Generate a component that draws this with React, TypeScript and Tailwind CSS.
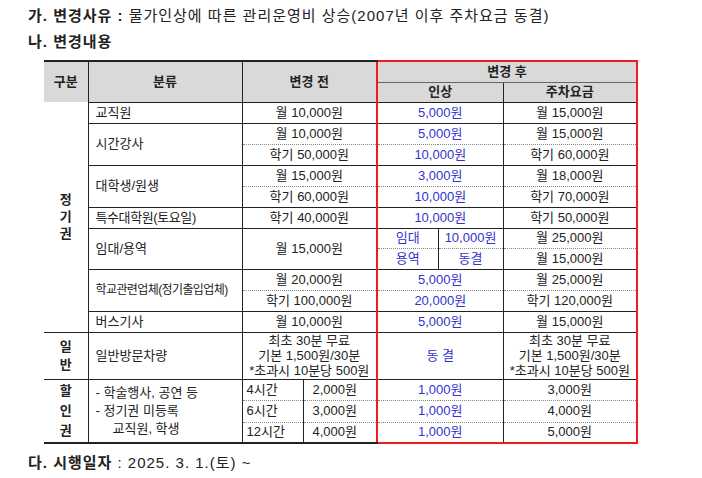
import React from "react";

const DARK = "border-[#222]";

type Row = { b: string; u: string; p: string };

// value columns (변경 전 / 인상 / 주차요금) for one row
function Vals({ r, top }: { r: Row; top: "solid" | "dotted" }) {
  const t =
    top === "solid"
      ? "border-t border-t-[#222]"
      : "border-t border-t-[#888] [border-top-style:dotted]";
  return (
    <>
      <td colSpan={2} className={`${t} border-r-2 border-r-[#ee1c1c] text-center`}>{r.b}</td>
      <td colSpan={2} className={`${t} border-l-2 border-l-[#ee1c1c] border-r border-r-[#222] text-center text-[#3333cc]`}>{r.u}</td>
      <td className={`${t} border-r-2 border-r-[#ee1c1c] text-center`}>{r.p}</td>
    </>
  );
}

function Group({ name, rows, label }: { name: React.ReactNode; rows: Row[]; label?: React.ReactNode }) {
  return (
    <>
      {rows.map((r, i) => (
        <tr key={i} className="h-[21px]">
          {i === 0 && label}
          {i === 0 && (
            <td rowSpan={rows.length} className="border-t border-t-[#222] border-r border-r-[#222] pl-[7px] text-left">
              {name}
            </td>
          )}
          <Vals r={r} top={i === 0 ? "solid" : "dotted"} />
        </tr>
      ))}
    </>
  );
}

function Vert({ chars, gap }: { chars: string[]; gap: string }) {
  return (
    <div className={`flex flex-col items-center font-bold ${gap}`}>
      {chars.map((c) => (
        <span key={c}>{c}</span>
      ))}
    </div>
  );
}

export default function App() {
  const dot = "border-t border-t-[#888] [border-top-style:dotted]";
  return (
    <div className="min-h-[478px] w-[702px] bg-white pt-[5px] font-['Liberation_Sans','Noto_Sans_CJK_KR',sans-serif] text-[#222]">
      <p className="pl-[28px] text-[15px] leading-[22px] tracking-[1px]">
        <b>가. 변경사유 :</b> 물가인상에 따른 관리운영비 상승(2007년 이후 주차요금 동결)
      </p>
      <p className="mt-[4px] pl-[28px] text-[15px] font-bold leading-[22px] tracking-[1px]">나. 변경내용</p>

      <table className="mt-[7px] ml-[44px] w-[593px] table-fixed border-collapse text-[13px] leading-[16px]">
        <colgroup>
          <col className="w-[44px]" />
          <col className="w-[154px]" />
          <col className="w-[61px]" />
          <col className="w-[74px]" />
          <col className="w-[61px]" />
          <col className="w-[65px]" />
          <col className="w-[134px]" />
        </colgroup>
        <thead>
          <tr className="h-[21px] bg-[#d9d9d9] font-bold">
            <th rowSpan={2} className="border-t-2 border-t-[#222] border-r border-r-[#222]">구분</th>
            <th rowSpan={2} className="border-t-2 border-t-[#222] border-r border-r-[#222]">분류</th>
            <th rowSpan={2} colSpan={2} className="border-t-2 border-t-[#222]">변경 전</th>
            <th colSpan={3} className="border-2 border-[#ee1c1c] border-b border-b-[#666]">변경 후</th>
          </tr>
          <tr className="h-[20px] bg-[#d9d9d9] font-bold">
            <th colSpan={2} className="border-l-2 border-l-[#ee1c1c] border-r border-r-[#222]">인상</th>
            <th className="border-r-2 border-r-[#ee1c1c]">주차요금</th>
          </tr>
        </thead>
        <tbody>
          <Group
            name="교직원"
            rows={[{ b: "월 10,000원", u: "5,000원", p: "월 15,000원" }]}
            label={
              <td rowSpan={11} className={`border-r ${DARK} align-middle`}>
                <Vert chars={["정", "기", "권"]} gap="leading-[17px]" />
              </td>
            }
          />
          <Group
            name="시간강사"
            rows={[
              { b: "월 10,000원", u: "5,000원", p: "월 15,000원" },
              { b: "학기 50,000원", u: "10,000원", p: "학기 60,000원" },
            ]}
          />
          <Group
            name="대학생/원생"
            rows={[
              { b: "월 15,000원", u: "3,000원", p: "월 18,000원" },
              { b: "학기 60,000원", u: "10,000원", p: "학기 70,000원" },
            ]}
          />
          <Group
            name={<span className="tracking-[-0.4px]">특수대학원(토요일)</span>}
            rows={[{ b: "학기 40,000원", u: "10,000원", p: "학기 50,000원" }]}
          />
          <tr className="h-[20px]">
            <td rowSpan={2} className="border-t border-t-[#222] border-r border-r-[#222] pl-[7px]">임대/용역</td>
            <td rowSpan={2} colSpan={2} className="border-t border-t-[#222] border-r-2 border-r-[#ee1c1c] text-center">월 15,000원</td>
            <td className="border-t border-t-[#222] border-l-2 border-l-[#ee1c1c] border-r border-r-[#222] text-center text-[#3333cc]">임대</td>
            <td className="border-t border-t-[#222] border-r border-r-[#222] text-center text-[#3333cc]">10,000원</td>
            <td className="border-t border-t-[#222] border-r-2 border-r-[#ee1c1c] text-center">월 25,000원</td>
          </tr>
          <tr className="h-[21px]">
            <td className={`${dot} border-l-2 border-l-[#ee1c1c] border-r border-r-[#222] text-center text-[#3333cc]`}>용역</td>
            <td className={`${dot} border-r border-r-[#222] text-center text-[#3333cc]`}>동결</td>
            <td className={`${dot} border-r-2 border-r-[#ee1c1c] text-center`}>월 15,000원</td>
          </tr>
          <Group
            name={<span className="whitespace-nowrap text-[12px] tracking-[-0.6px]">학교관련업체(정기출입업체)</span>}
            rows={[
              { b: "월 20,000원", u: "5,000원", p: "월 25,000원" },
              { b: "학기 100,000원", u: "20,000원", p: "학기 120,000원" },
            ]}
          />
          <Group name="버스기사" rows={[{ b: "월 10,000원", u: "5,000원", p: "월 15,000원" }]} />

          <tr className="h-[47px]">
            <td className="border-t border-t-[#222] border-r border-r-[#222]">
              <Vert chars={["일", "반"]} gap="leading-[18px]" />
            </td>
            <td className="border-t border-t-[#222] border-r border-r-[#222] pl-[7px]">일반방문차량</td>
            <td colSpan={2} className="border-t border-t-[#222] border-r-2 border-r-[#ee1c1c] text-center leading-[15px]">
              최초 30분 무료
              <br />
              기본 1,500원/30분
              <br />
              *초과시 10분당 500원
            </td>
            <td colSpan={2} className="border-t border-t-[#222] border-l-2 border-l-[#ee1c1c] border-r border-r-[#222] text-center text-[#3333cc]">
              동&nbsp;결
            </td>
            <td className="border-t border-t-[#222] border-r-2 border-r-[#ee1c1c] text-center leading-[15px]">
              최초 30분 무료
              <br />
              기본 1,500원/30분
              <br />
              *초과시 10분당 500원
            </td>
          </tr>

          {[
            ["4시간", "2,000원", "3,000원"],
            ["6시간", "3,000원", "4,000원"],
            ["12시간", "4,000원", "5,000원"],
          ].map(([h, b, p], i) => {
            const t = i === 0 ? "border-t border-t-[#222]" : dot;
            const bot = i === 2 ? "border-b-2 border-b-[#222]" : "";
            const botRed = i === 2 ? "border-b-2 border-b-[#ee1c1c]" : "";
            return (
              <tr key={h} className={i === 1 ? "h-[22px]" : "h-[21px]"}>
                {i === 0 && (
                  <>
                    <td rowSpan={3} className="border-t border-t-[#222] border-b-2 border-b-[#222] border-r border-r-[#222]">
                      <Vert chars={["할", "인", "권"]} gap="leading-[20px]" />
                    </td>
                    <td rowSpan={3} className="border-t border-t-[#222] border-b-2 border-b-[#222] border-r border-r-[#222] pl-[7px] leading-[18px]">
                      <div>- 학술행사, 공연 등</div>
                      <div>- 정기권 미등록</div>
                      <div className="pl-[17px]">교직원, 학생</div>
                    </td>
                  </>
                )}
                <td className={`${t} ${bot} border-r border-r-[#222] pl-[4px]`}>{h}</td>
                <td className={`${t} ${bot} border-r-2 border-r-[#ee1c1c] pl-[9px]`}>{b}</td>
                <td colSpan={2} className={`${t} ${botRed} border-l-2 border-l-[#ee1c1c] border-r border-r-[#222] text-center text-[#3333cc]`}>
                  1,000원
                </td>
                <td className={`${t} ${botRed} border-r-2 border-r-[#ee1c1c] text-center`}>{p}</td>
              </tr>
            );
          })}
        </tbody>
      </table>

      <p className="mt-[8px] pl-[28px] text-[15px] leading-[22px] tracking-[1px]">
        <b>다. 시행일자</b> : 2025. 3. 1.(토) ~
      </p>
    </div>
  );
}
